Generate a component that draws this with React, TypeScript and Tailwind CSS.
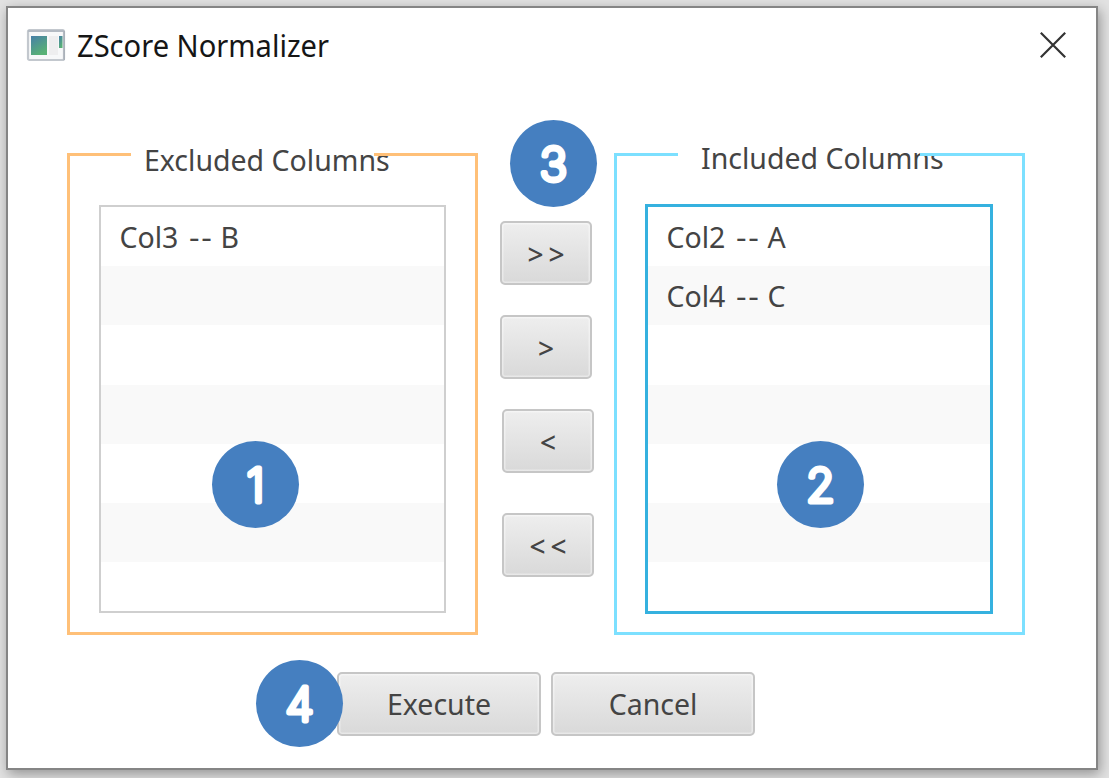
import React from "react";

const FONT = "font-['Noto_Sans','Open_Sans',sans-serif]";

function Badge({ label, className }: { label: string; className: string }) {
  return (
    <div className={`absolute z-10 size-[87px] rounded-full bg-[#457fc0] ${className}`}>
      <svg viewBox="0 0 87 87" className="size-full">
        <text
          x="43.5"
          y="60.5"
          textAnchor="middle"
          strokeLinejoin="round"
          strokeLinecap="round"
          strokeWidth="5"
          className="fill-white stroke-white font-['Inter',sans-serif] text-[46px] font-extralight"
        >
          {label}
        </text>
      </svg>
    </div>
  );
}

function Button({ children, className, textClass }: { children: React.ReactNode; className: string; textClass: string }) {
  return (
    <button
      className={`flex h-16 shrink-0 items-center justify-center rounded-[5px] border-[2.5px] border-[#c6c6c6] bg-linear-to-b from-[#eeeeee] to-[#d9d9d9] text-[#444] shadow-[inset_0_0_0_1.5px_rgba(255,255,255,0.4)] ${className}`}
    >
      <span className={`whitespace-pre ${textClass}`}>{children}</span>
    </button>
  );
}

const ARROW = "pt-[2px] text-[28px] leading-none font-medium";
const DOUBLE_ARROW = "pt-[2px] pl-[5px] text-[28px] leading-none font-medium tracking-[5px]";

function Rows({ items }: { items: [string, string][] }) {
  return (
    <ul className="flex h-full flex-col overflow-hidden">
      {Array.from({ length: 7 }, (_, i) => (
        <li key={i} className="flex h-[59.2px] shrink-0 items-center pl-[18.5px] text-[28.5px] leading-none text-[#444] odd:bg-white even:bg-[#f9f9f9]">
          {items[i] && (
            <span className="flex origin-left whitespace-pre pt-px">
              <span className="w-[69px]">{items[i][0]}</span>
              <span className="w-[32px] origin-left scale-x-[1.15] tracking-[1.5px]">--</span>
              <span>{items[i][1]}</span>
            </span>
          )}
        </li>
      ))}
    </ul>
  );
}

type GroupProps = {
  title: string;
  items: [string, string][];
  edge: string;
  line: string;
  rightLine: string;
  titleClass: string;
  listClass: string;
};

function Group({ title, items, edge, line, rightLine, titleClass, listClass }: GroupProps) {
  return (
    <section className={`relative flex h-[482px] w-[411px] shrink-0 flex-col border-x-[3px] border-b-[3px] ${edge}`}>
      <h2 className={`absolute whitespace-pre text-[28.5px] leading-none text-[#444] ${titleClass}`}>{title}</h2>
      <div className="relative flex h-[3px] shrink-0 justify-between">
        <i className={`w-[61px] ${line}`} />
        <i className={`${rightLine} ${line}`} />
      </div>
      <div className={listClass}>
        <Rows items={items} />
      </div>
    </section>
  );
}

export default function App() {
  return (
    <div className={`h-[778px] w-[1109px] overflow-hidden bg-[#e2e2e2] pt-[6px] pl-[6px] ${FONT}`}>
      <main className="relative flex h-[764px] w-[1092px] flex-col border-2 border-[#858585] bg-white shadow-[2px_4px_12px_rgba(0,0,0,0.35)]">
        <header className="flex h-[74px] shrink-0 items-center justify-between pr-[29px] pl-[18px]">
          <div className="flex items-center gap-[11px]">
            <svg viewBox="0 0 40 34" className="h-[34px] w-10">
              <defs>
                <linearGradient id="pane" x1="0" y1="0" x2="0.5" y2="1">
                  <stop offset="0" stopColor="#467fa8" />
                  <stop offset="1" stopColor="#58b175" />
                </linearGradient>
              </defs>
              <rect x="2" y="2" width="36" height="30" rx="1.5" fill="#f7f8f9" stroke="#c3c8ce" strokeWidth="2.2" />
              <path d="M2 3H38" stroke="#b3bac3" strokeWidth="2" />
              <path d="M38.2 3V32" stroke="#a9b0b8" strokeWidth="1.5" />
              <rect x="5" y="8" width="16" height="19" fill="url(#pane)" />
              <rect x="23" y="8" width="9" height="19" fill="#eeeeef" />
              <rect x="33" y="8" width="3.5" height="12" fill="url(#pane)" />
            </svg>
            <h1 className="origin-left scale-x-[.97] whitespace-pre pt-[2px] text-[30px] leading-none text-[#161616]">ZScore Normalizer</h1>
          </div>
          <svg viewBox="0 0 28 28" className="size-7">
            <path d="M1.8 1.8L26.2 26.2M26.2 1.8L1.8 26.2" stroke="#333" strokeWidth="2.2" fill="none" />
          </svg>
        </header>

        <div className="flex shrink-0 pt-[71px] pl-[59px]">
          <Group
            title="Excluded Columns"
            items={[["Col3", "B"]]}
            edge="border-[#ffc078]"
            line="bg-[#ffc078]"
            rightLine="w-[101px]"
            titleClass="left-[74px] -top-[7px]"
            listClass="mt-[49px] ml-[29px] h-[408px] w-[347px] border-[2.5px] border-[#cfcfcf]"
          />
          <div className="flex w-[136px] shrink-0 flex-col pt-[68px] pl-[22px]">
            <Button className="w-[92px]" textClass={DOUBLE_ARROW}>{">>"}</Button>
            <Button className="mt-[30px] w-[92px]" textClass={ARROW}>{">"}</Button>
            <Button className="mt-[30px] ml-0.5 w-[92px]" textClass={ARROW}>{"<"}</Button>
            <Button className="mt-10 ml-0.5 w-[92px]" textClass={DOUBLE_ARROW}>{"<<"}</Button>
          </div>
          <Group
            title="Included Columns"
            items={[["Col2", "A"], ["Col4", "C"]]}
            edge="border-[#7ce0ff]"
            line="bg-[#7ce0ff]"
            rightLine="w-[102px]"
            titleClass="left-[84px] -top-[9px]"
            listClass="mt-[48px] ml-[28px] h-[410px] w-[348px] border-[3px] border-[#35b1df]"
          />
        </div>

        <footer className="flex gap-[10px] pt-[37px] pl-[329px]">
          <Button className="w-[204px]" textClass="text-[28.5px] leading-none">Execute</Button>
          <Button className="w-[204px]" textClass="text-[28.5px] leading-none">Cancel</Button>
        </footer>

        <Badge label="1" className="top-[433px] left-[204px]" />
        <Badge label="2" className="top-[433px] left-[769px]" />
        <Badge label="3" className="top-[112px] left-[502px]" />
        <Badge label="4" className="top-[652px] left-[248px]" />
      </main>
    </div>
  );
}
